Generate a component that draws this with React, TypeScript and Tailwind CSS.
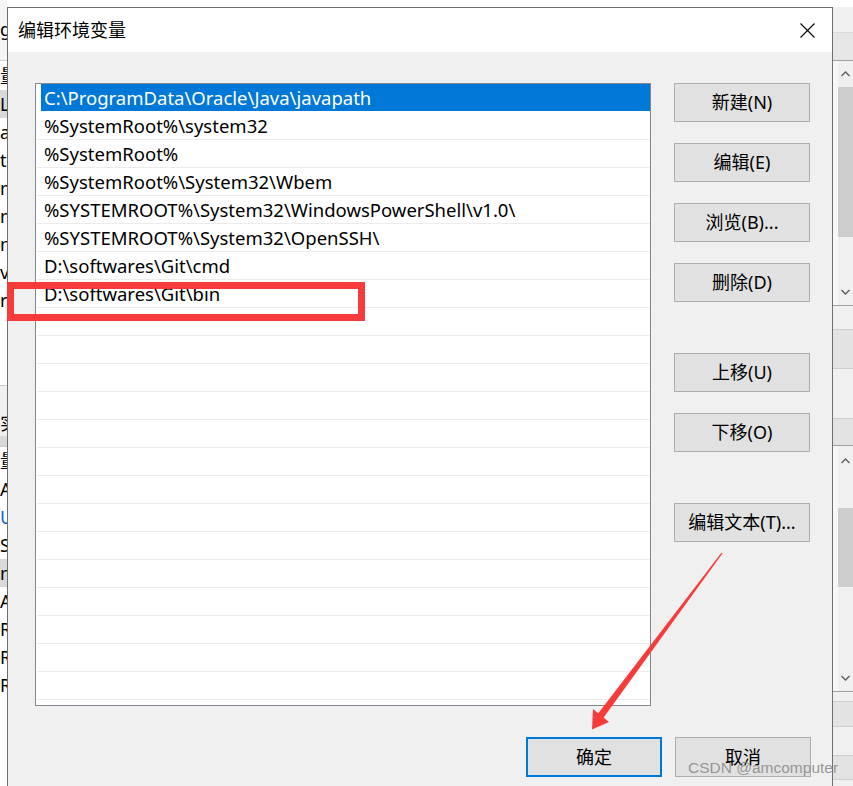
import React from "react";

const items = [
  "C:\\ProgramData\\Oracle\\Java\\javapath",
  "%SystemRoot%\\system32",
  "%SystemRoot%",
  "%SystemRoot%\\System32\\Wbem",
  "%SYSTEMROOT%\\System32\\WindowsPowerShell\\v1.0\\",
  "%SYSTEMROOT%\\System32\\OpenSSH\\",
  "D:\\softwares\\Git\\cmd",
  "D:\\softwares\\Git\\bin",
];

const FONT = "font-['Noto_Sans','Noto_Sans_CJK_SC',sans-serif]";

function Btn({ label, className = "" }: { label: string; className?: string }) {
  return (
    <div
      className={`w-[136px] h-[39px] bg-[#e1e1e1] border border-[#adadad] flex items-center justify-center text-[18px] text-black ${className}`}
    >
      {label}
    </div>
  );
}

function Chevron({ up }: { up?: boolean }) {
  return (
    <svg width="9" height="6" viewBox="0 0 9 6" className="block">
      <path
        d={up ? "M0.5 5 L4.5 1 L8.5 5" : "M0.5 1 L4.5 5 L8.5 1"}
        fill="none"
        stroke="#606060"
        strokeWidth="1.4"
      />
    </svg>
  );
}

function LeftRow({ t, h = 28, cls = "" }: { t: string; h?: number; cls?: string }) {
  return (
    <div className={`flex items-center whitespace-nowrap text-[18px] leading-none ${cls}`} style={{ height: h }}>
      {t}
    </div>
  );
}

export default function App() {
  const rows = Array.from({ length: 22 }, (_, i) => items[i] ?? "");
  return (
    <div className={`relative w-[853px] h-[786px] overflow-hidden bg-[#f0f0f0] flex ${FONT}`}>
      {/* left background window strip */}
      <div className="w-[7px] shrink-0 overflow-hidden flex flex-col bg-white text-black">
        <div className="h-[61px] border-b border-[#d0d0d0] bg-[#f5f5f5] pt-[19px] text-[18px] leading-[20px] whitespace-nowrap">g</div>
        <LeftRow t="量" h={29} />
        <LeftRow t="Li" cls="bg-[#d9d9d9]" />
        <LeftRow t="a" />
        <LeftRow t="t" />
        <LeftRow t="m" />
        <LeftRow t="m" />
        <LeftRow t="nt" />
        <LeftRow t="v(" />
        <LeftRow t="r" />
        <div className="h-[72px] border-b border-[#c8c8c8]" />
        <div className="h-[50px] flex items-end pb-[4px] text-[18px] leading-none bg-[#f0f0f0]">实</div>
        <div className="h-[11px] bg-[#d9d9d9] border-b border-[#c8c8c8]" />
        <LeftRow t="量" />
        <LeftRow t="A\" />
        <LeftRow t="U" cls="text-[#0066cc]" />
        <LeftRow t="S" />
        <LeftRow t="nt" cls="bg-[#d9d9d9]" />
        <LeftRow t="A" />
        <LeftRow t="R" />
        <LeftRow t="R" />
        <LeftRow t="R" />
      </div>

      {/* middle column: dialog */}
      <div className="w-[826px] shrink-0 flex flex-col">
        <div className="h-[7px] bg-white shrink-0" />
        <div className="flex-1 flex flex-col border-x border-t border-[#6f6f6f] bg-[#f0f0f0]">
          {/* title bar */}
          <div className="h-[44px] bg-white flex items-center justify-between pl-[10px] pr-[17px] shrink-0">
            <span className="text-[18px] text-black">编辑环境变量</span>
            <svg width="15" height="15" viewBox="0 0 15 15">
              <path d="M0.5 0.5 L14.5 14.5 M14.5 0.5 L0.5 14.5" stroke="#000" strokeWidth="1.1" />
            </svg>
          </div>
          {/* body */}
          <div className="flex-1 flex flex-col pt-[31px] pl-[27px] pr-[21px]">
            <div className="flex gap-[23px]">
              <div className="w-[616px] h-[623px] bg-white border border-[#828790] overflow-hidden">
                {rows.map((t, i) =>
                  i === 0 ? (
                    <div key={i} className="h-[28px] flex items-center pl-[5px] pb-[1px]">
                      <div className="flex-1 h-[27px] bg-[#0078d7] text-white text-[18.5px] flex items-center pl-[3px] whitespace-nowrap">
                        {t}
                      </div>
                    </div>
                  ) : (
                    <div
                      key={i}
                      className="h-[28px] ml-[1px] border-b border-[#ececec] flex items-center pl-[7px] text-[18.5px] text-black whitespace-nowrap"
                    >
                      {t}
                    </div>
                  )
                )}
              </div>
              <div className="flex flex-col w-[136px]">
                <Btn label="新建(N)" />
                <Btn label="编辑(E)" className="mt-[21px]" />
                <Btn label="浏览(B)..." className="mt-[21px]" />
                <Btn label="删除(D)" className="mt-[21px]" />
                <Btn label="上移(U)" className="mt-[51px]" />
                <Btn label="下移(O)" className="mt-[21px]" />
                <Btn label="编辑文本(T)..." className="mt-[51px]" />
              </div>
            </div>
            <div className="flex justify-end gap-[13px] mt-[31px]">
              <div className="w-[136px] h-[40px] bg-[#e1e1e1] border-2 border-[#0078d7] flex items-center justify-center text-[18px] text-black">
                确定
              </div>
              <div className="w-[136px] h-[40px] bg-[#e1e1e1] border border-[#adadad] flex items-center justify-center text-[18px] text-black">
                取消
              </div>
            </div>
          </div>
        </div>
      </div>

      {/* right background window strip */}
      <div className="w-[20px] shrink-0 flex flex-col overflow-hidden">
        <div className="h-[7px] bg-white" />
        <div className="h-[26px] bg-[#f0f0f0] border-b border-[#d8d8d8]" />
        <div className="h-[28px] bg-[#e6e6e6] border-b border-[#a0a0a0]" />
        <div className="h-[245px] flex border-b border-[#a0a0a0]">
          <div className="w-[5px] bg-[#f7f7f7]" />
          <div className="flex-1 bg-[#f0f0f0] flex flex-col items-center">
            <div className="h-[26px] flex items-center"><Chevron up /></div>
            <div className="w-full h-[150px] bg-[#cdcdcd]" />
            <div className="flex-1" />
            <div className="h-[26px] flex items-center"><Chevron /></div>
          </div>
        </div>
        <div className="h-[24px] bg-[#f0f0f0] border-b border-[#cfcfcf]" />
        <div className="h-[39px] bg-[#e3e3e3] border-b border-[#cfcfcf]" />
        <div className="h-[50px] bg-[#f0f0f0] border-b border-[#cfcfcf]" />
        <div className="h-[27px] bg-[#e3e3e3] border-b border-[#a0a0a0]" />
        <div className="h-[246px] flex border-b border-[#a0a0a0]">
          <div className="w-[5px] bg-[#f7f7f7]" />
          <div className="flex-1 bg-[#f0f0f0] flex flex-col items-center">
            <div className="h-[30px] flex items-center"><Chevron up /></div>
            <div className="h-[32px]" />
            <div className="w-full h-[79px] bg-[#cdcdcd]" />
            <div className="flex-1" />
            <div className="h-[26px] flex items-center"><Chevron /></div>
          </div>
        </div>
        <div className="h-[10px] bg-[#f0f0f0] border-b border-[#cfcfcf]" />
        <div className="h-[25px] bg-[#e3e3e3] border-b border-[#cfcfcf]" />
        <div className="h-[29px] bg-[#f0f0f0] border-b border-[#cfcfcf]" />
        <div className="h-[24px] bg-[#e3e3e3] border-b border-[#cfcfcf]" />
        <div className="flex-1 bg-[#f0f0f0]" />
      </div>

      {/* annotations */}
      <div className="absolute left-[7px] top-[282px] w-[358px] h-[39px] border-[7px] border-[#f73b3b]" />
      <svg className="absolute left-0 top-0" width="853" height="786" viewBox="0 0 853 786">
        <polygon points="722.6,553.3 721.4,552.7 597.7,713.9 603.3,718.1" fill="#f73b3b" />
        <polygon points="592,729.5 593,709 609,722" fill="#f73b3b" />
      </svg>
      <div className="absolute left-[688px] top-[758px] text-[15.5px] leading-[20px] text-[#8c8c8c]/90 whitespace-nowrap font-['Liberation_Sans',sans-serif]">
        CSDN @amcomputer
      </div>
    </div>
  );
}
